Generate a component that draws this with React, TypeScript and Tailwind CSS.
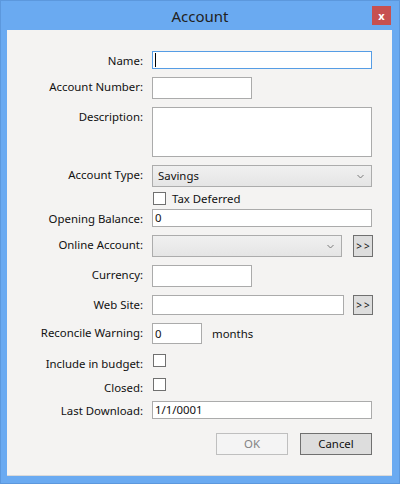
import React from "react"

// Small chevron used inside the combo boxes
function Chevron() {
  return (
    <svg width="7" height="5" viewBox="0 0 7 5" className="shrink-0">
      <polyline points="0.5,1 3.5,4 6.5,1" fill="none" stroke="#7a7a7a" strokeWidth="1" />
    </svg>
  )
}

function Label({ text }: { text: string }) {
  return (
    <div className="w-[136px] shrink-0 text-right leading-4 pt-[2px] text-[#111]">{text}</div>
  )
}

function Row({ mt, h, label, children }: { mt: string; h: string; label?: string; children: React.ReactNode }) {
  return (
    <div className={`flex items-start gap-[9px] ${mt} ${h}`}>
      {label ? <Label text={label} /> : <div className="w-[136px] shrink-0" />}
      {children}
    </div>
  )
}

function TextBox({ w, h, value, focused }: { w: string; h: string; value?: string; focused?: boolean }) {
  return (
    <div
      className={`${w} ${h} bg-white border flex items-center pl-[2px] leading-4 ${
        focused ? "border-[#569de5]" : "border-[#ababab]"
      }`}
    >
      {focused && <span className="w-px h-[14px] bg-black" />}
      {value}
    </div>
  )
}

function Combo({ w, value }: { w: string; value?: string }) {
  return (
    <div className={`${w} h-[22px] border border-[#acacac] bg-gradient-to-b from-[#f0f0f0] to-[#e5e5e5] flex items-center pl-[5px] pr-[7px]`}>
      <span className="flex-1 leading-4">{value}</span>
      <Chevron />
    </div>
  )
}

function MoreButton({ h }: { h: string }) {
  return (
    <div className={`w-[20px] ${h} ml-[1px] border border-[#707070] bg-[#dddddd] flex items-center justify-center text-[10px] leading-none tracking-[2px] pl-[2px] text-[#111]`}>
      &gt;&gt;
    </div>
  )
}

function CheckBox() {
  return <div className="w-[13px] h-[13px] ml-px bg-white border border-[#707070] shrink-0" />
}

export default function App() {
  return (
    <div
      className="w-[400px] h-[484px] bg-[#6aaaf1] border border-[#5c98dd] flex flex-col text-[11.4px] text-[#111]"
      style={{ fontFamily: '"Noto Sans", "Liberation Sans", sans-serif' }}
    >
      <div className="relative h-[29px] flex items-center justify-center">
        <span className="text-[15px] text-[#222] mt-[2px]">Account</span>
        <div className="absolute right-[8px] top-[5px] w-[19px] h-[19px] bg-[#c75050] flex items-center justify-center text-white text-[11px] font-bold leading-none">
          x
        </div>
      </div>

      <div className="ml-[6px] w-[385px] h-[446px] bg-[#f4f3f2] border-b border-[#d9d9d9] flex flex-col">
        <Row mt="mt-[21px]" h="h-[18px]" label="Name:">
          <TextBox w="w-[220px]" h="h-[18px]" focused />
        </Row>
        <Row mt="mt-[8px]" h="h-[22px]" label="Account Number:">
          <TextBox w="w-[100px]" h="h-[22px]" />
        </Row>
        <Row mt="mt-[8px]" h="h-[50px]" label="Description:">
          <TextBox w="w-[220px]" h="h-[50px]" />
        </Row>
        <Row mt="mt-[8px]" h="h-[22px]" label="Account Type:">
          <Combo w="w-[220px]" value="Savings" />
        </Row>
        <Row mt="mt-[5px]" h="h-[13px]">
          <div className="flex items-start gap-[6px]">
            <CheckBox />
            <span className="leading-4 -mt-[1px]">Tax Deferred</span>
          </div>
        </Row>
        <Row mt="mt-[4px]" h="h-[18px]" label="Opening Balance:">
          <TextBox w="w-[220px]" h="h-[18px]" value="0" />
        </Row>
        <Row mt="mt-[8px]" h="h-[22px]" label="Online Account:">
          <div className="flex items-start gap-[10px]">
            <Combo w="w-[190px]" />
            <MoreButton h="h-[22px]" />
          </div>
        </Row>
        <Row mt="mt-[8px]" h="h-[22px]" label="Currency:">
          <TextBox w="w-[100px]" h="h-[22px]" />
        </Row>
        <Row mt="mt-[8px]" h="h-[20px]" label="Web Site:">
          <div className="flex items-start gap-[8px]">
            <TextBox w="w-[192px]" h="h-[20px]" />
            <MoreButton h="h-[20px]" />
          </div>
        </Row>
        <Row mt="mt-[8px]" h="h-[21px]" label="Reconcile Warning:">
          <div className="flex items-start gap-[10px]">
            <TextBox w="w-[50px]" h="h-[21px]" value="0" />
            <span className="leading-4 pt-[3px]">months</span>
          </div>
        </Row>
        <Row mt="mt-[10px]" h="h-[13px]" label="Include in budget:">
          <CheckBox />
        </Row>
        <Row mt="mt-[11px]" h="h-[13px]" label="Closed:">
          <CheckBox />
        </Row>
        <Row mt="mt-[10px]" h="h-[18px]" label="Last Download:">
          <TextBox w="w-[220px]" h="h-[18px]" value="1/1/0001" />
        </Row>

        <div className="mt-[14px] flex justify-end gap-[12px] pr-[20px]">
          <div className="w-[72px] h-[22px] border border-[#bfbfbf] bg-[#f4f4f4] flex items-center justify-center text-[#838383]">
            OK
          </div>
          <div className="w-[72px] h-[22px] border border-[#707070] bg-[#dddddd] flex items-center justify-center">
            Cancel
          </div>
        </div>
      </div>
    </div>
  )
}
